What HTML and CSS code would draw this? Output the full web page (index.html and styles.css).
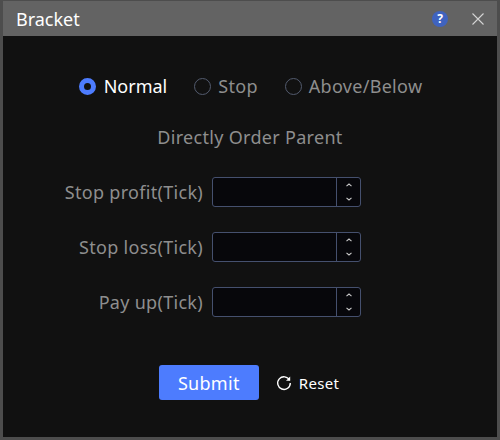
FILE: index.html
```html
<!DOCTYPE html>
<html lang="en">

<head>
    <meta charset="UTF-8">
    <meta name="viewport" content="width=device-width, initial-scale=1.0">
    <title>Bracket</title>
    <link rel="stylesheet" href="styles.css">
</head>

<body>
    <div class="dialog">
        <div class="dialog-header">
            <h1 class="dialog-title">Bracket</h1>
            <div class="dialog-actions">
                <span class="help-icon">?</span>
                <svg class="close-icon" width="14" height="14" viewBox="0 0 14 14">
                    <path d="M1.5 1.5L12.5 12.5M12.5 1.5L1.5 12.5" />
                </svg>
            </div>
        </div>

        <div class="dialog-body">
            <div class="radio-group">
                <label class="radio radio-checked"><span class="radio-dot"></span>Normal</label>
                <label class="radio"><span class="radio-dot"></span>Stop</label>
                <label class="radio"><span class="radio-dot"></span>Above/Below</label>
            </div>

            <p class="subtitle">Directly Order Parent</p>

            <div class="form">
                <label class="form-label">Stop profit(Tick)</label>
                <div class="number-input">
                    <div class="number-field"></div>
                    <div class="number-steps">
                        <svg width="6" height="4" viewBox="0 0 6 4"><path d="M0.5 3.2L3 1L5.5 3.2" /></svg>
                        <svg width="6" height="4" viewBox="0 0 6 4"><path d="M0.5 0.8L3 3L5.5 0.8" /></svg>
                    </div>
                </div>

                <label class="form-label">Stop loss(Tick)</label>
                <div class="number-input">
                    <div class="number-field"></div>
                    <div class="number-steps">
                        <svg width="6" height="4" viewBox="0 0 6 4"><path d="M0.5 3.2L3 1L5.5 3.2" /></svg>
                        <svg width="6" height="4" viewBox="0 0 6 4"><path d="M0.5 0.8L3 3L5.5 0.8" /></svg>
                    </div>
                </div>

                <label class="form-label">Pay up(Tick)</label>
                <div class="number-input">
                    <div class="number-field"></div>
                    <div class="number-steps">
                        <svg width="6" height="4" viewBox="0 0 6 4"><path d="M0.5 3.2L3 1L5.5 3.2" /></svg>
                        <svg width="6" height="4" viewBox="0 0 6 4"><path d="M0.5 0.8L3 3L5.5 0.8" /></svg>
                    </div>
                </div>
            </div>

            <div class="actions">
                <button class="btn-submit">Submit</button>
                <button class="btn-reset">
                    <svg width="16" height="16" viewBox="0 0 16 16">
                        <path d="M13.6 5.2A6.3 6.3 0 1 0 14.3 8" />
                        <path class="arrow-head" d="M14.2 1.6V5.8H10Z" />
                    </svg>
                    Reset
                </button>
            </div>
        </div>
    </div>
</body>

</html>
```

FILE: styles.css
```css
* {
    margin: 0;
    padding: 0;
    box-sizing: border-box;
}

body {
    font-family: "Noto Sans", "Open Sans", sans-serif;
    background: #4d4d4d;
    width: 500px;
    height: 440px;
    overflow: hidden;
}

.dialog {
    width: 500px;
    height: 440px;
    border: 3px solid #4d4d4d;
    border-top-width: 1px;
    display: flex;
    flex-direction: column;
}

.dialog-header {
    height: 35px;
    background-color: #636363;
    display: flex;
    justify-content: space-between;
    align-items: center;
    padding: 0 12px 0 13px;
    flex-shrink: 0;
}

.dialog-title {
    font-size: 18px;
    font-weight: 400;
    color: #ffffff;
}

.dialog-actions {
    display: flex;
    align-items: center;
    gap: 23px;
}

.help-icon {
    width: 16px;
    height: 16px;
    border-radius: 50%;
    background-color: #3f63bf;
    color: #ffffff;
    font-size: 12px;
    font-weight: 700;
    line-height: 16px;
    text-align: center;
}

.close-icon path {
    fill: none;
    stroke: #d4d4d4;
    stroke-width: 1.1;
}

.dialog-body {
    flex: 1;
    background-color: #111111;
    padding-top: 37px;
}

.radio-group {
    display: flex;
    justify-content: center;
    gap: 27px;
    height: 26px;
    padding-left: 1px;
}

.radio {
    display: flex;
    align-items: center;
    gap: 7px;
    font-size: 18px;
    letter-spacing: 0.3px;
    color: #8e8e8e;
}

.radio-dot {
    width: 17px;
    height: 17px;
    border-radius: 50%;
    border: 1px solid #535b6e;
}

.radio-checked {
    gap: 8px;
    color: #ffffff;
    letter-spacing: 0;
}

.radio-checked .radio-dot {
    border: 5px solid #4d7cfe;
    background-color: #111111;
}

.subtitle {
    margin-top: 25px;
    font-size: 18px;
    letter-spacing: 0.3px;
    line-height: 26px;
    color: #8e8e8e;
    text-align: center;
}

.form {
    margin-top: 27px;
    display: grid;
    grid-template-columns: 200px 149px;
    column-gap: 9px;
    row-gap: 25px;
}

.form-label {
    font-size: 18px;
    letter-spacing: 0.3px;
    line-height: 30px;
    color: #8e8e8e;
    text-align: right;
}

.number-input {
    height: 30px;
    display: flex;
    border: 1px solid #45506e;
    border-radius: 3px;
    background-color: #07070b;
}

.number-field {
    flex: 1;
}

.number-steps {
    width: 24px;
    border-left: 1px solid #45506e;
    display: flex;
    flex-direction: column;
    align-items: center;
    justify-content: space-between;
    padding: 5px 0 5px;
}

.number-steps svg path {
    fill: none;
    stroke: #c9c9c9;
    stroke-width: 1.1;
}

.actions {
    margin-top: 48px;
    padding-right: 2px;
    display: flex;
    justify-content: center;
    align-items: center;
    gap: 17px;
}

.btn-submit {
    width: 100px;
    height: 35px;
    border: none;
    border-radius: 3px;
    background-color: #4d7cfe;
    color: #ffffff;
    font-family: inherit;
    font-size: 18px;
    letter-spacing: 0.3px;
}

.btn-reset {
    display: flex;
    align-items: center;
    gap: 7px;
    border: none;
    background: none;
    color: #ffffff;
    font-family: inherit;
    font-size: 15px;
    letter-spacing: 0.3px;
}

.btn-reset svg path {
    fill: none;
    stroke: #ffffff;
    stroke-width: 1.4;
}

.btn-reset svg .arrow-head {
    fill: #ffffff;
    stroke: none;
}
```
